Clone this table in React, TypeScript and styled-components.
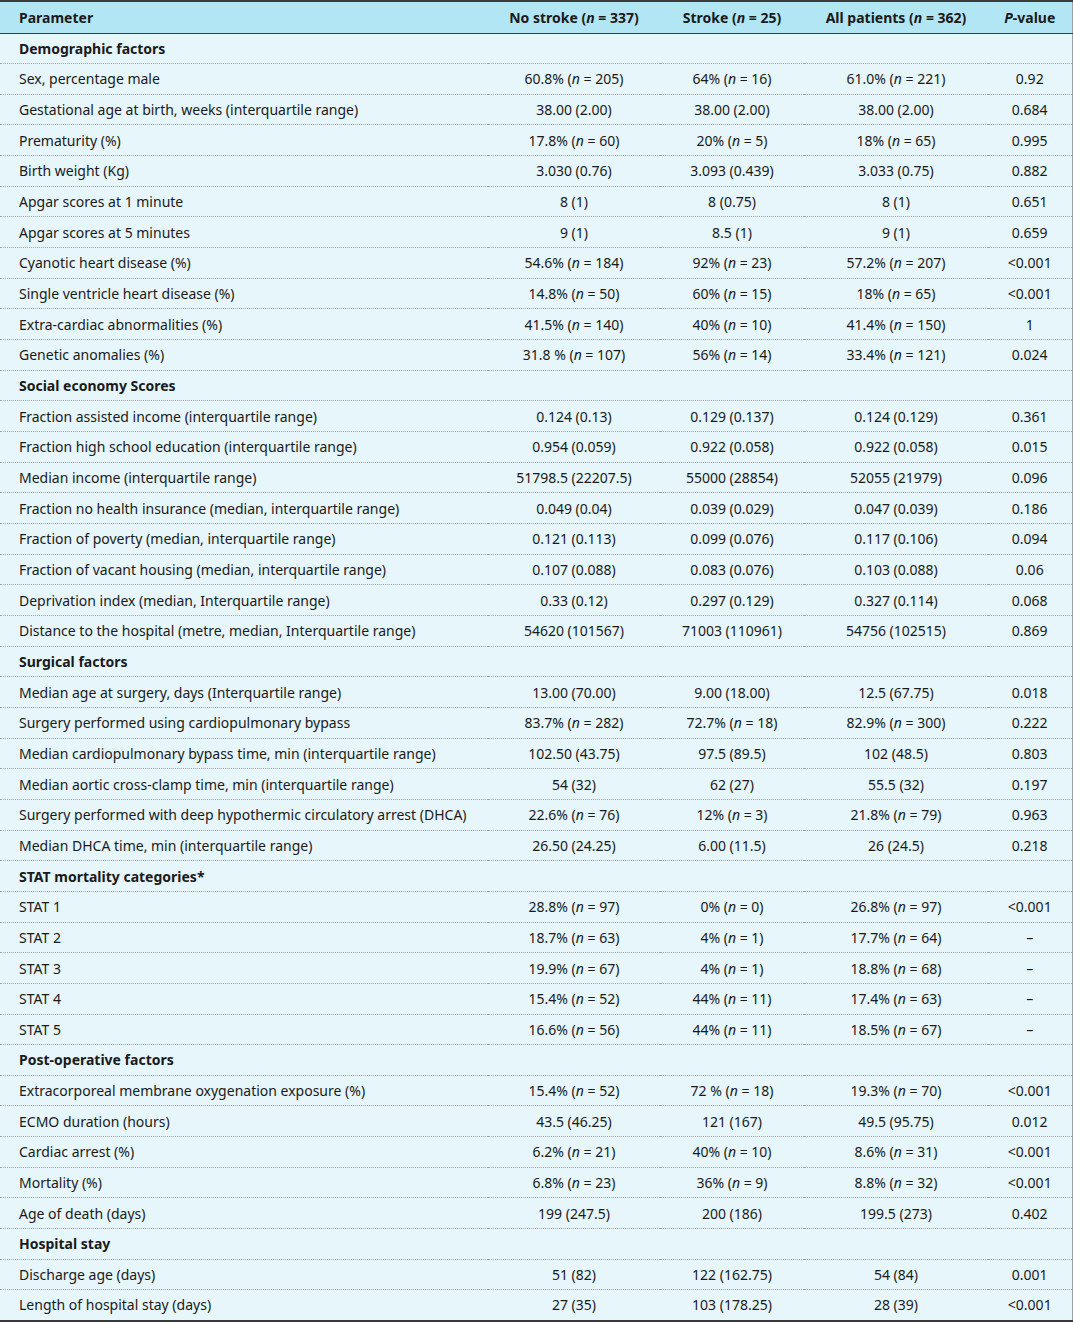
import React from "react";
import styled, { createGlobalStyle } from "styled-components";

const GlobalStyle = createGlobalStyle`
  html, body { margin: 0; padding: 0; background: #ffffff; }
  body { font-family: "Noto Sans", "DejaVu Sans", sans-serif; color: #1a1a1a; }
  *, *::before, *::after { box-sizing: border-box; }
`;

const Table = styled.table`
  width: 1072px;
  table-layout: fixed;
  border-collapse: collapse;
  border-top: 2px solid #3a3a3a;
  border-bottom: 2px solid #3a3a3a;
  border-right: 1px solid #9aa4a8;
  font-size: 14px;
  background: #e6f6fa;
`;

const HeadRow = styled.tr`
  background: #b3e6f4;
  height: 32px;
  border-bottom: 1.5px solid #3a3a3a;
`;

const Th = styled.th<{ $left?: boolean }>`
  text-align: ${(p) => (p.$left ? "left" : "center")};
  padding: ${(p) => (p.$left ? "1px 0 0 19px" : "1px 0 0 0")};
  font-weight: 700;
  color: #1a1a1a;
  white-space: nowrap;
`;

const Row = styled.tr<{ $last?: boolean }>`
  height: 30.66px;
  border-bottom: ${(p) => (p.$last ? "none" : "1px dotted #9ea6a9")};
`;

const Label = styled.td<{ $section?: boolean }>`
  padding: 0 0 0 19px;
  text-align: left;
  font-weight: ${(p) => (p.$section ? 700 : 400)};
  white-space: nowrap;
`;

const Cell = styled.td`
  padding: 0;
  text-align: center;
  white-space: nowrap;
`;

const Col = styled.col<{ $w: number }>`
  width: ${(p) => p.$w}px;
`;

type DataRow = { label: string; v: [string, string, string, string] };
type Section = { title: string; rows: DataRow[] };

const r = (label: string, a: string, b: string, c: string, d: string): DataRow => ({
  label,
  v: [a, b, c, d],
});

const sections: Section[] = [
  {
    title: "Demographic factors",
    rows: [
      r("Sex, percentage male", "60.8% (n=205)", "64% (n=16)", "61.0% (n=221)", "0.92"),
      r("Gestational age at birth, weeks (interquartile range)", "38.00 (2.00)", "38.00 (2.00)", "38.00 (2.00)", "0.684"),
      r("Prematurity (%)", "17.8% (n=60)", "20% (n=5)", "18% (n=65)", "0.995"),
      r("Birth weight (Kg)", "3.030 (0.76)", "3.093 (0.439)", "3.033 (0.75)", "0.882"),
      r("Apgar scores at 1 minute", "8 (1)", "8 (0.75)", "8 (1)", "0.651"),
      r("Apgar scores at 5 minutes", "9 (1)", "8.5 (1)", "9 (1)", "0.659"),
      r("Cyanotic heart disease (%)", "54.6% (n=184)", "92% (n=23)", "57.2% (n=207)", "<0.001"),
      r("Single ventricle heart disease (%)", "14.8% (n=50)", "60% (n=15)", "18% (n=65)", "<0.001"),
      r("Extra-cardiac abnormalities (%)", "41.5% (n=140)", "40% (n=10)", "41.4% (n=150)", "1"),
      r("Genetic anomalies (%)", "31.8 % (n=107)", "56% (n=14)", "33.4% (n=121)", "0.024"),
    ],
  },
  {
    title: "Social economy Scores",
    rows: [
      r("Fraction assisted income (interquartile range)", "0.124 (0.13)", "0.129 (0.137)", "0.124 (0.129)", "0.361"),
      r("Fraction high school education (interquartile range)", "0.954 (0.059)", "0.922 (0.058)", "0.922 (0.058)", "0.015"),
      r("Median income (interquartile range)", "51798.5 (22207.5)", "55000 (28854)", "52055 (21979)", "0.096"),
      r("Fraction no health insurance (median, interquartile range)", "0.049 (0.04)", "0.039 (0.029)", "0.047 (0.039)", "0.186"),
      r("Fraction of poverty (median, interquartile range)", "0.121 (0.113)", "0.099 (0.076)", "0.117 (0.106)", "0.094"),
      r("Fraction of vacant housing (median, interquartile range)", "0.107 (0.088)", "0.083 (0.076)", "0.103 (0.088)", "0.06"),
      r("Deprivation index (median, Interquartile range)", "0.33 (0.12)", "0.297 (0.129)", "0.327 (0.114)", "0.068"),
      r("Distance to the hospital (metre, median, Interquartile range)", "54620 (101567)", "71003 (110961)", "54756 (102515)", "0.869"),
    ],
  },
  {
    title: "Surgical factors",
    rows: [
      r("Median age at surgery, days (Interquartile range)", "13.00 (70.00)", "9.00 (18.00)", "12.5 (67.75)", "0.018"),
      r("Surgery performed using cardiopulmonary bypass", "83.7% (n=282)", "72.7% (n=18)", "82.9% (n=300)", "0.222"),
      r("Median cardiopulmonary bypass time, min (interquartile range)", "102.50 (43.75)", "97.5 (89.5)", "102 (48.5)", "0.803"),
      r("Median aortic cross-clamp time, min (interquartile range)", "54 (32)", "62 (27)", "55.5 (32)", "0.197"),
      r("Surgery performed with deep hypothermic circulatory arrest (DHCA)", "22.6% (n=76)", "12% (n=3)", "21.8% (n=79)", "0.963"),
      r("Median DHCA time, min (interquartile range)", "26.50 (24.25)", "6.00 (11.5)", "26 (24.5)", "0.218"),
    ],
  },
  {
    title: "STAT mortality categories*",
    rows: [
      r("STAT 1", "28.8% (n=97)", "0% (n=0)", "26.8% (n=97)", "<0.001"),
      r("STAT 2", "18.7% (n=63)", "4% (n=1)", "17.7% (n=64)", "–"),
      r("STAT 3", "19.9% (n=67)", "4% (n=1)", "18.8% (n=68)", "–"),
      r("STAT 4", "15.4% (n=52)", "44% (n=11)", "17.4% (n=63)", "–"),
      r("STAT 5", "16.6% (n=56)", "44% (n=11)", "18.5% (n=67)", "–"),
    ],
  },
  {
    title: "Post-operative factors",
    rows: [
      r("Extracorporeal membrane oxygenation exposure (%)", "15.4% (n=52)", "72 % (n=18)", "19.3% (n=70)", "<0.001"),
      r("ECMO duration (hours)", "43.5 (46.25)", "121 (167)", "49.5 (95.75)", "0.012"),
      r("Cardiac arrest (%)", "6.2% (n=21)", "40% (n=10)", "8.6% (n=31)", "<0.001"),
      r("Mortality (%)", "6.8% (n=23)", "36% (n=9)", "8.8% (n=32)", "<0.001"),
      r("Age of death (days)", "199 (247.5)", "200 (186)", "199.5 (273)", "0.402"),
    ],
  },
  {
    title: "Hospital stay",
    rows: [
      r("Discharge age (days)", "51 (82)", "122 (162.75)", "54 (84)", "0.001"),
      r("Length of hospital stay (days)", "27 (35)", "103 (178.25)", "28 (39)", "<0.001"),
    ],
  },
];

const EQ = " = ";

const renderValue = (s: string): React.ReactNode => {
  const m = s.match(/^(.*)\(n=(\d+)\)$/);
  if (!m) return s;
  return (
    <>
      {m[1]}(<i>n</i>{EQ}{m[2]})
    </>
  );
};

const widths = [488, 172, 144, 184, 84];

export default function App() {
  const total = sections.reduce((acc, s) => acc + 1 + s.rows.length, 0);
  let idx = 0;
  return (
    <>
      <GlobalStyle />
      <Table>
        <colgroup>
          {widths.map((w, i) => (
            <Col key={i} $w={w} />
          ))}
        </colgroup>
        <thead>
          <HeadRow>
            <Th $left>Parameter</Th>
            <Th>No stroke (<i>n</i>{EQ}337)</Th>
            <Th>Stroke (<i>n</i>{EQ}25)</Th>
            <Th>All patients (<i>n</i>{EQ}362)</Th>
            <Th><i>P</i>-value</Th>
          </HeadRow>
        </thead>
        <tbody>
          {sections.map((sec) => {
            idx += 1;
            const secRow = (
              <Row key={sec.title} $last={idx === total}>
                <Label $section>{sec.title}</Label>
                <Cell />
                <Cell />
                <Cell />
                <Cell />
              </Row>
            );
            const rows = sec.rows.map((row) => {
              idx += 1;
              return (
                <Row key={row.label} $last={idx === total}>
                  <Label>{row.label}</Label>
                  {row.v.map((v, i) => (
                    <Cell key={i}>{renderValue(v)}</Cell>
                  ))}
                </Row>
              );
            });
            return (
              <React.Fragment key={sec.title}>
                {secRow}
                {rows}
              </React.Fragment>
            );
          })}
        </tbody>
      </Table>
    </>
  );
}
